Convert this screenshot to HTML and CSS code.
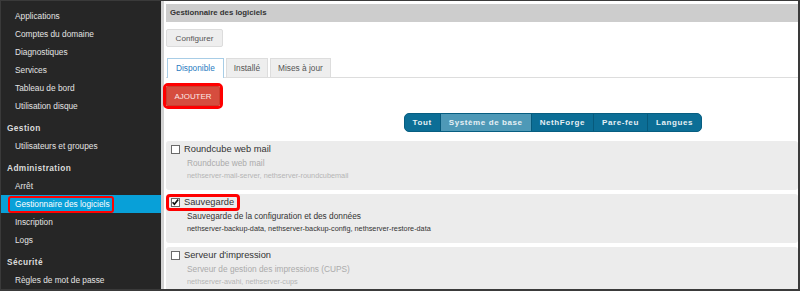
FILE: index.html
```html
<!DOCTYPE html>
<html lang="fr">
<head>
    <meta charset="UTF-8">
    <meta name="viewport" content="width=device-width, initial-scale=1.0">
    <title>Gestionnaire des logiciels</title>
    <link rel="stylesheet" href="styles.css">
</head>
<body>
    <div class="frame">
        <nav class="sidebar">
            <a class="nav-item">Applications</a>
            <a class="nav-item">Comptes du domaine</a>
            <a class="nav-item">Diagnostiques</a>
            <a class="nav-item">Services</a>
            <a class="nav-item">Tableau de bord</a>
            <a class="nav-item">Utilisation disque</a>

            <div class="nav-head">Gestion</div>
            <a class="nav-item">Utilisateurs et groupes</a>

            <div class="nav-head">Administration</div>
            <a class="nav-item">Arrêt</a>
            <a class="nav-item active"><span class="mark">Gestionnaire des logiciels</span></a>
            <a class="nav-item">Inscription</a>
            <a class="nav-item">Logs</a>

            <div class="nav-head">Sécurité</div>
            <a class="nav-item">Règles de mot de passe</a>
        </nav>

        <main class="content">
            <div class="page-title">Gestionnaire des logiciels</div>

            <div class="toolbar">
                <button class="btn">Configurer</button>
            </div>

            <div class="tabs">
                <a class="tab active">Disponible</a>
                <a class="tab">Installé</a>
                <a class="tab">Mises à jour</a>
            </div>

            <div class="actions">
                <button class="btn-add marked">AJOUTER</button>
            </div>

            <div class="filters">
                <div class="filter-group">
                    <a class="filter">Tout</a>
                    <a class="filter active">Système de base</a>
                    <a class="filter">NethForge</a>
                    <a class="filter">Pare-feu</a>
                    <a class="filter">Langues</a>
                </div>
            </div>

            <div class="pkg">
                <div class="pkg-name">
                    <span class="check"></span>
                    <span>Roundcube web mail</span>
                </div>
                <div class="pkg-desc">Roundcube web mail</div>
                <div class="pkg-list">nethserver-mail-server, nethserver-roundcubemail</div>
            </div>

            <div class="pkg installed">
                <div class="pkg-name marked">
                    <span class="check">
                        <svg width="9" height="9" viewBox="0 0 9 9"><path d="M1.6 4.3 L3.4 6.3 L7.2 1.4" fill="none" stroke="#111" stroke-width="1.7"/></svg>
                    </span>
                    <span>Sauvegarde</span>
                </div>
                <div class="pkg-desc">Sauvegarde de la configuration et des données</div>
                <div class="pkg-list">nethserver-backup-data, nethserver-backup-config, nethserver-restore-data</div>
            </div>

            <div class="pkg">
                <div class="pkg-name">
                    <span class="check"></span>
                    <span>Serveur d'impression</span>
                </div>
                <div class="pkg-desc">Serveur de gestion des impressions (CUPS)</div>
                <div class="pkg-list">nethserver-avahi, nethserver-cups</div>
            </div>
        </main>
    </div>
</body>
</html>
```

FILE: styles.css
```css
body {
    margin: 0;
    font-family: "Liberation Sans", Arial, sans-serif;
    background-color: #fff;
}

.frame {
    display: flex;
    height: 291px;
    box-sizing: border-box;
    border-style: solid;
    border-color: #3a3a3a;
    border-width: 1px 2px 2px 1px;
    overflow: hidden;
}

/* menu de gauche */
.sidebar {
    width: 160px;
    flex-shrink: 0;
    background-color: #262626;
    border-right: 3px solid #d2d2d2;
    padding-top: 6px;
}

.nav-item {
    display: block;
    height: 18px;
    line-height: 18px;
    padding-left: 14px;
    font-size: 8.3px;
    color: #e4e4e4;
    white-space: nowrap;
}

.nav-item.active {
    background-color: #08a0d8;
    color: #fff;
}

.nav-head {
    margin-top: 4px;
    height: 18px;
    line-height: 18px;
    padding-left: 6px;
    font-size: 8.3px;
    font-weight: bold;
    letter-spacing: 0.4px;
    color: #dcdcdc;
}

/* encadrés rouges */
.mark {
    position: relative;
    display: inline-block;
}

.mark::after {
    content: "";
    position: absolute;
    top: 1px;
    bottom: 0;
    left: -7px;
    right: -4px;
    border: 2px solid #f00;
    border-radius: 3px;
}

.marked {
    position: relative;
}

.marked::after {
    content: "";
    position: absolute;
    top: -4px;
    bottom: -4px;
    left: -4px;
    right: -4px;
    border: 3px solid #f00;
    border-radius: 5px;
}

/* contenu */
.content {
    flex: 1;
    padding: 3px 0 0 2px;
    min-width: 0;
}

.page-title {
    height: 18px;
    line-height: 18px;
    padding-left: 4px;
    background-color: #cdcdcd;
    font-size: 7.8px;
    font-weight: bold;
    color: #333;
}

.toolbar {
    display: flex;
    margin-top: 7px;
}

.btn {
    height: 18px;
    width: 57px;
    padding: 0;
    font-family: inherit;
    font-size: 8.1px;
    color: #555;
    background-color: #eee;
    border: 1px solid #dcdcdc;
    border-radius: 2px;
}

.tabs {
    display: flex;
    gap: 2px;
    margin-top: 11px;
    border-bottom: 1px solid #ddd;
    padding-left: 1px;
}

.tab {
    height: 18px;
    line-height: 18px;
    margin-bottom: -1px;
    padding: 0 7px;
    font-size: 8.3px;
    color: #555;
    background-color: #eee;
    border: 1px solid #ddd;
    border-bottom: none;
}

.tab.active {
    height: 19px;
    padding: 0 8px;
    color: #2a7bbf;
    background-color: #fff;
    border-color: #a8cde6;
}

.actions {
    margin-top: 8px;
    display: flex;
}

.btn-add {
    height: 20px;
    width: 54px;
    padding: 0;
    font-family: inherit;
    font-size: 7.9px;
    color: #fbe9e7;
    background-color: #d64d3e;
    border: 1px solid #c9402f;
    border-radius: 2px;
}

.filters {
    display: flex;
    justify-content: flex-end;
    margin-top: 7px;
    padding-right: 96px;
}

.filter-group {
    display: flex;
    height: 19px;
    border-radius: 5px;
    overflow: hidden;
    background-color: #0c6e96;
    border: 1px solid #075e81;
    box-sizing: border-box;
}

.filter {
    line-height: 17px;
    padding: 0 8px;
    font-size: 8px;
    font-weight: bold;
    letter-spacing: 0.6px;
    color: #e6f0f5;
    border-left: 1px solid #075a7c;
}

.filter:first-child {
    border-left: none;
}

.filter.active {
    background-color: #4e99b7;
}

/* paquets */
.pkg {
    margin-top: 9px;
    padding: 2px 5px 8px;
    background-color: #ececec;
    border-radius: 3px;
    font-size: 8px;
}

.pkg + .pkg {
    margin-top: 4px;
}

.pkg-name {
    display: flex;
    width: fit-content;
    align-items: center;
    gap: 4px;
    height: 12px;
    font-size: 9.3px;
    color: #333;
}

.pkg-name.marked::after {
    top: -2px;
    bottom: -3px;
    left: -5px;
    right: -6px;
    border-radius: 4px;
}

.check {
    display: inline-block;
    width: 9px;
    height: 9px;
    box-sizing: border-box;
    border: 1px solid #6a6a6a;
    background-color: #fff;
    position: relative;
}

.check svg {
    position: absolute;
    top: -1px;
    left: -1px;
}

.pkg-desc {
    margin: 2px 0 0 16px;
    line-height: 12px;
    font-size: 8.3px;
    color: #ababab;
}

.pkg-list {
    margin: 1px 0 0 16px;
    line-height: 12px;
    font-size: 7.3px;
    color: #b5b5b5;
}

.installed .pkg-desc,
.installed .pkg-list {
    color: #333;
}
```
